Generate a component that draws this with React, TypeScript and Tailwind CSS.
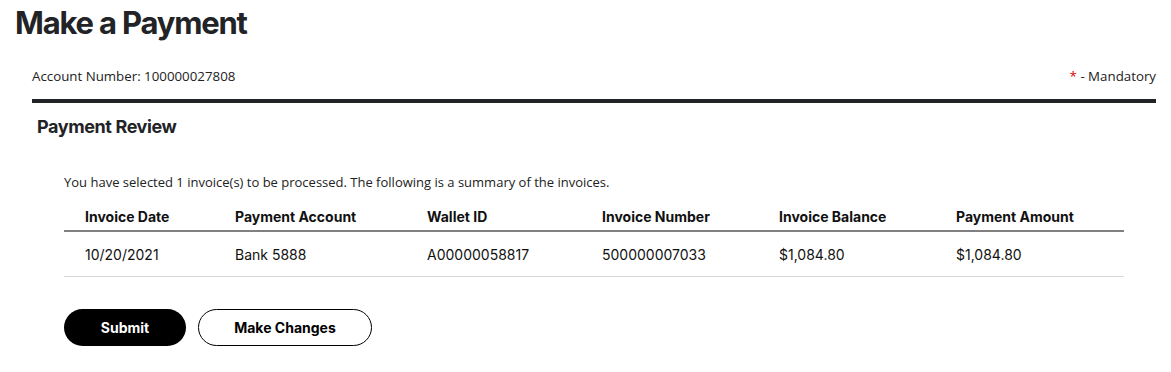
const rows = [
  {
    date: "10/20/2021",
    account: "Bank 5888",
    wallet: "A00000058817",
    invoice: "500000007033",
    balance: "$1,084.80",
    amount: "$1,084.80",
  },
]

const cols = "grid grid-cols-[150px_192px_175px_177px_177px_189px]"

export default function App() {
  return (
    <div className="w-[1171px] h-[372px] bg-white text-[#222222] font-['Inter','Liberation_Sans',sans-serif]">
      <h1 className="pl-[15px] pt-[1px] h-[48px] text-[31px] leading-[44px] font-bold tracking-[-1.2px] text-[#222326]">
        Make a Payment
      </h1>

      <div className="ml-[32px] mr-[15px]">
        <div className="flex justify-between items-center h-[51px] pt-[7px] text-[13.3px] font-['Open_Sans','Noto_Sans',sans-serif] text-[#222]">
          <span>Account Number: 100000027808</span>
          <span>
            <span className="text-[#e00000]">*</span> - Mandatory
          </span>
        </div>
        <div className="h-[4px] bg-[#222326]" />
        <h2 className="pl-[5px] pt-[12px] h-[40px] text-[18px] leading-[24px] font-bold tracking-[-0.4px] text-[#222326]">
          Payment Review
        </h2>
      </div>

      <div className="ml-[64px] w-[1060px]">
        <p className="mt-[30px] text-[13px] leading-[18px] font-['Open_Sans','Noto_Sans',sans-serif] text-[#222]">
          You have selected 1 invoice(s) to be processed. The following is a summary of the invoices.
        </p>

        <div className={`${cols} mt-[11px] h-[30px] items-center border-b-2 border-[#808080] text-[14px] font-bold text-[#111]`}>
          <div className="pl-[21px]">Invoice Date</div>
          <div className="pl-[21px]">Payment Account</div>
          <div className="pl-[21px]">Wallet ID</div>
          <div className="pl-[21px]">Invoice Number</div>
          <div className="pl-[21px]">Invoice Balance</div>
          <div className="pl-[21px]">Payment Amount</div>
        </div>

        {rows.map((r) => (
          <div key={r.invoice} className={`${cols} h-[45px] items-center border-b border-[#d8d8d8] text-[14px] text-[#111]`}>
            <div className="pl-[21px]">{r.date}</div>
            <div className="pl-[21px]">{r.account}</div>
            <div className="pl-[21px]">{r.wallet}</div>
            <div className="pl-[21px]">{r.invoice}</div>
            <div className="pl-[21px]">{r.balance}</div>
            <div className="pl-[21px]">{r.amount}</div>
          </div>
        ))}

        <div className="flex gap-[12px] mt-[32px]">
          <button className="w-[122px] h-[37px] rounded-full bg-black text-white text-[14px] font-bold">
            Submit
          </button>
          <button className="w-[174px] h-[37px] rounded-full border border-black bg-white text-black text-[14px] font-bold">
            Make Changes
          </button>
        </div>
      </div>
    </div>
  )
}
